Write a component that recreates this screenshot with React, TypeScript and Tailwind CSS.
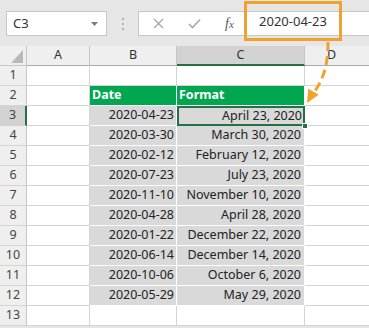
import React from "react";

const rows: [string, string][] = [
  ["2020-04-23", "April 23, 2020"],
  ["2020-03-30", "March 30, 2020"],
  ["2020-02-12", "February 12, 2020"],
  ["2020-07-23", "July 23, 2020"],
  ["2020-11-10", "November 10, 2020"],
  ["2020-04-28", "April 28, 2020"],
  ["2020-01-22", "December 22, 2020"],
  ["2020-06-14", "December 14, 2020"],
  ["2020-10-06", "October 6, 2020"],
  ["2020-05-29", "May 29, 2020"],
];

const font = { fontFamily: '"Noto Sans", "Open Sans", sans-serif' };

function RowHead({ n, sel }: { n: number; sel?: boolean }) {
  return (
    <div
      className={
        "h-[20px] flex items-center justify-center text-[12.5px] text-[#444] border-b border-[#d4d4d4] " +
        (sel ? "bg-[#d2d2d2] border-r-2 border-r-[#217346]" : "bg-[#efefef] border-r border-r-[#c6c6c6]")
      }
    >
      {n}
    </div>
  );
}

function Blank() {
  return <div className="h-[20px] bg-white border-r border-b border-[#d4d4d4]" />;
}

export default function App() {
  return (
    <div className="w-[369px] h-[328px] overflow-hidden bg-[#e6e6e6] relative text-[#222]" style={font}>
      {/* toolbar */}
      <div className="h-[46px] flex items-start pt-[11px] bg-[#e6e6e6]">
        <div className="ml-[6px] w-[101px] h-[25px] bg-white border border-[#c6c6c6] flex items-center justify-between pl-[6px] pr-[8px]">
          <span className="text-[13px] text-[#333]">C3</span>
          <svg width="7" height="4" viewBox="0 0 7 4">
            <path d="M0 0 H7 L3.5 4 Z" fill="#7a7a7a" />
          </svg>
        </div>
        <div className="w-[31px] h-[25px] flex flex-col items-center justify-center gap-[3px]">
          <div className="w-[2px] h-[2px] bg-[#b0b0b0]" />
          <div className="w-[2px] h-[2px] bg-[#b0b0b0]" />
          <div className="w-[2px] h-[2px] bg-[#b0b0b0]" />
        </div>
        <div className="flex-1 h-[25px] bg-white border border-r-0 border-[#c6c6c6] flex items-center">
          <svg width="11" height="11" viewBox="0 0 11 11" className="ml-[14px]">
            <path d="M1 1 L10 10 M10 1 L1 10" stroke="#a8a8a8" strokeWidth="1.4" />
          </svg>
          <svg width="13" height="11" viewBox="0 0 13 11" className="ml-[24px]">
            <path d="M1 6 L4.5 9.5 L12 1.5" stroke="#a8a8a8" strokeWidth="1.6" fill="none" />
          </svg>
          <span
            className="ml-[24px] text-[14px] italic text-[#555]"
            style={{ fontFamily: '"Liberation Serif", serif' }}
          >
            f<span className="text-[11px]">x</span>
          </span>
          <div className="ml-[12px] w-px h-[25px] bg-[#d4d4d4]" />
        </div>
      </div>

      {/* orange highlight box */}
      <div className="absolute left-[244px] top-[1px] w-[98px] h-[40px] border-[3px] border-[#f0a22e] flex items-center justify-center pt-[1px]">
        <span className="text-[13px] text-[#333]">2020-04-23</span>
      </div>

      {/* grid */}
      <div className="grid grid-cols-[27px_63px_87px_128px_64px] text-[12.5px]">
        {/* header row */}
        <div className="h-[20px] bg-[#efefef] border-r border-b border-[#c6c6c6] relative">
          <svg width="12" height="13" viewBox="0 0 12 13" className="absolute right-[3px] bottom-[2px]">
            <path d="M12 0 V13 H0 Z" fill="#b8b8b8" />
          </svg>
        </div>
        <div className="h-[20px] bg-[#efefef] border-r border-b border-r-[#c6c6c6] border-b-[#ababab] flex items-center justify-center text-[#333]">A</div>
        <div className="h-[20px] bg-[#efefef] border-r border-b border-r-[#c6c6c6] border-b-[#ababab] flex items-center justify-center text-[#333]">B</div>
        <div className="h-[20px] bg-[#d2d2d2] border-r border-r-[#c6c6c6] border-b-2 border-b-[#217346] flex items-center justify-center text-[#333]">C</div>
        <div className="h-[20px] bg-[#efefef] border-b border-b-[#ababab] flex items-center pl-[22px] text-[#333]">D</div>

        {/* row 1 */}
        <RowHead n={1} />
        <Blank />
        <Blank />
        <Blank />
        <div className="h-[20px] bg-white border-b border-[#d4d4d4]" />

        {/* row 2 */}
        <RowHead n={2} />
        <Blank />
        <div className="h-[20px] bg-[#00a650] border-r border-b border-white flex items-center pl-[2px] text-white font-bold">Date</div>
        <div className="h-[20px] bg-[#00a650] border-r border-b border-white flex items-center pl-[2px] text-white font-bold">Format</div>
        <div className="h-[20px] bg-white border-b border-[#d4d4d4]" />

        {rows.map(([d, f], i) => (
          <React.Fragment key={i}>
            <RowHead n={i + 3} sel={i === 0} />
            <Blank />
            <div className="h-[20px] bg-[#d9d9d9] border-r border-b border-white flex items-center justify-end pr-[2px] text-[#222]">{d}</div>
            {i === 0 ? (
              <div className="h-[20px] bg-[#d9d9d9] border-2 border-[#217346] flex items-center justify-end pr-[1px] text-[#222] relative">
                {f}
                <div className="absolute right-[-5px] bottom-[-5px] w-[6px] h-[6px] bg-[#217346] border border-white" />
              </div>
            ) : (
              <div className="h-[20px] bg-[#d9d9d9] border-r border-b border-white flex items-center justify-end pr-[3px] text-[#222]">{f}</div>
            )}
            <div className="h-[20px] bg-white border-b border-[#d4d4d4]" />
          </React.Fragment>
        ))}

        {/* row 13 */}
        <RowHead n={13} />
        <Blank />
        <Blank />
        <Blank />
        <div className="h-[20px] bg-white border-b border-[#d4d4d4]" />
      </div>

      {/* dashed arrow */}
      <svg className="absolute left-0 top-0 pointer-events-none" width="369" height="328" viewBox="0 0 369 328">
        <path d="M328 42 C328 62 325 76 314.5 92" stroke="#f0a22e" strokeWidth="3" fill="none" strokeDasharray="9 5" />
        <path d="M307 103 L308.3 88.7 L318.7 94.7 Z" fill="#f0a22e" />
      </svg>
    </div>
  );
}
